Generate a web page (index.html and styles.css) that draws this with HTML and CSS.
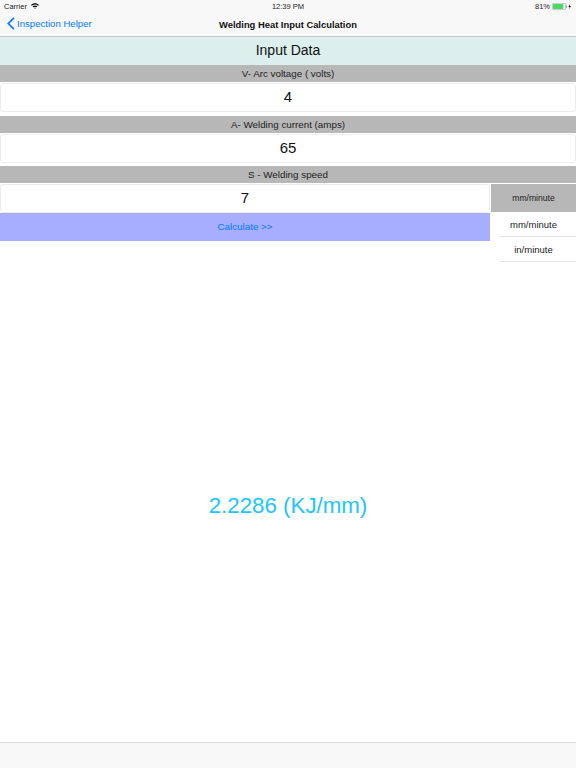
FILE: index.html
```html
<!DOCTYPE html>
<html lang="en">
<head>
    <meta charset="UTF-8">
    <title>Welding Heat Input Calculation</title>
    <link rel="stylesheet" href="styles.css">
</head>
<body>
    <div class="top-bars">
        <div class="status-bar">
            <div class="status-left">
                <span>Carrier</span>
                <svg class="wifi" width="8" height="6" viewBox="0 0 10 7">
                    <path d="M0 2.2C2.8-.6 7.2-.6 10 2.2L8.9 3.3C6.7 1.2 3.3 1.2 1.1 3.3Z"/>
                    <path d="M2 4.1C3.7 2.5 6.3 2.5 8 4.1L6.9 5.2C5.8 4.2 4.2 4.2 3.1 5.2Z"/>
                    <path d="M3.9 6 5 7 6.1 6C5.5 5.4 4.5 5.4 3.9 6Z"/>
                </svg>
            </div>
            <div class="status-time">12:39 PM</div>
            <div class="status-right">
                <span>81%</span>
                <svg width="20" height="7" viewBox="0 0 20 7">
                    <rect x="0.25" y="0.25" width="13.5" height="6.5" rx="1.4" fill="none" stroke="#8a8a8a" stroke-width="0.5"/>
                    <rect x="1" y="1" width="10.4" height="5" rx="0.7" fill="#4cd964"/>
                    <rect x="14.2" y="2.3" width="0.8" height="2.4" fill="#8a8a8a"/>
                    <path d="M18.2 0.8 16.4 3.9H17.6L17.2 6.2 19 3.1H17.8Z" fill="#222"/>
                </svg>
            </div>
        </div>
        <div class="nav-bar">
            <a href="#" class="back-link">
                <svg width="8" height="13" viewBox="0 0 8 13">
                    <path d="M6.9 0.9 1.3 6.5 6.9 12.1" fill="none" stroke="#007aff" stroke-width="1.7"/>
                </svg>
                <span>Inspection Helper</span>
            </a>
            <div class="nav-title">Welding Heat Input Calculation</div>
        </div>
    </div>

    <div class="section-title">Input Data</div>

    <div class="field-label">V- Arc voltage ( volts)</div>
    <div class="field-wrap"><div class="field">4</div></div>

    <div class="field-label second">A- Welding current (amps)</div>
    <div class="field-wrap"><div class="field">65</div></div>

    <div class="field-label third">S - Welding speed</div>
    <div class="speed-row">
        <div class="speed-left">
            <div class="field">7</div>
            <a href="#" class="calc-btn">Calculate &gt;&gt;</a>
        </div>
        <div class="unit-picker">
            <div class="unit-selected">mm/minute</div>
            <div class="unit-option">mm/minute</div>
            <div class="unit-option">in/minute</div>
        </div>
    </div>

    <div class="result">2.2286 (KJ/mm)</div>

    <div class="toolbar"></div>
</body>
</html>
```

FILE: styles.css
```css
* {
    box-sizing: border-box;
}

body {
    font-family: "Liberation Sans", Arial, sans-serif;
    margin: 0;
    width: 576px;
    height: 768px;
    overflow: hidden;
    display: flex;
    flex-direction: column;
    background-color: #fff;
    color: #111;
}

.top-bars {
    height: 37px;
    background-color: #f8f8f8;
    border-bottom: 1px solid #c9c9c9;
}

.status-bar {
    height: 12px;
    padding: 0 4px;
    display: grid;
    grid-template-columns: 1fr auto 1fr;
    align-items: center;
    font-size: 7.5px;
    color: #222;
}

.status-left {
    display: flex;
    align-items: center;
    gap: 4px;
}

.status-time {
    text-align: center;
}

.status-right {
    display: flex;
    justify-content: flex-end;
    align-items: center;
    gap: 2px;
}

.nav-bar {
    height: 24px;
    position: relative;
    display: flex;
    align-items: center;
    justify-content: center;
}

.back-link {
    position: absolute;
    left: 7px;
    top: 5px;
    display: flex;
    align-items: center;
    gap: 2px;
    color: #007aff;
    text-decoration: none;
    font-size: 9.6px;
}

.nav-title {
    font-size: 9.4px;
    font-weight: bold;
}

.section-title {
    height: 28px;
    background-color: #dcefec;
    text-align: center;
    font-size: 14px;
    line-height: 27px;
}

.field-label {
    height: 17px;
    background-color: #b7b7b7;
    text-align: center;
    font-size: 9.8px;
    line-height: 17px;
    color: #222;
}

.field-label.second {
    margin-top: 4px;
}

.field-label.third {
    margin-top: 3px;
}

.field-wrap {
    padding-top: 1px;
    background-color: #fff;
}

.field {
    height: 29px;
    background-color: #fff;
    border: 1px solid #ececec;
    border-radius: 3px;
    text-align: center;
    font-size: 15px;
    line-height: 26px;
    color: #111;
}

.speed-row {
    display: flex;
    padding-top: 1px;
}

.speed-left {
    width: 490px;
}

.calc-btn {
    display: block;
    height: 28px;
    background-color: #a8aeff;
    color: #007aff;
    text-align: center;
    text-decoration: none;
    font-size: 9.8px;
    line-height: 28px;
}

.unit-picker {
    margin-left: 1px;
    flex: 1;
}

.unit-selected {
    height: 28px;
    background-color: #b7b7b7;
    text-align: center;
    font-size: 8.6px;
    line-height: 28px;
    color: #222;
}

.unit-option {
    height: 25px;
    margin-left: 9px;
    padding-right: 9px;
    border-bottom: 1px solid #e4e4e4;
    text-align: center;
    font-size: 9.5px;
    line-height: 25px;
    color: #222;
}

.result {
    flex: 1;
    display: flex;
    align-items: center;
    justify-content: center;
    padding-top: 8px;
    font-size: 22.3px;
    color: #1cc5ff;
}

.toolbar {
    height: 26px;
    background-color: #f8f8f8;
    border-top: 1px solid #dcdcdc;
}
```
